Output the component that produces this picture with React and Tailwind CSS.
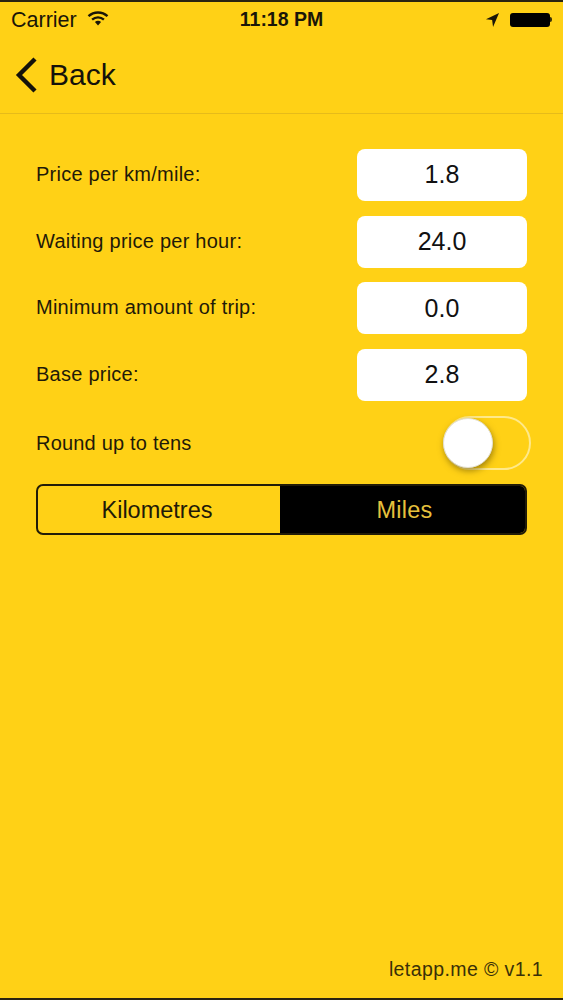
import React from "react";

const fields = [
  { label: "Price per km/mile:", value: "1.8" },
  { label: "Waiting price per hour:", value: "24.0" },
  { label: "Minimum amount of trip:", value: "0.0" },
  { label: "Base price:", value: "2.8" },
];

const WifiIcon = () => (
  <svg width="22" height="15" viewBox="0 0 21 15" className="ml-[10px] mb-[4px]">
    <path d="M1 5.2 C6.4 0.2 14.6 0.2 20 5.2" fill="none" stroke="#1a1608" strokeWidth="2.4" />
    <path d="M4.6 8.6 C8 5.6 13 5.6 16.4 8.6" fill="none" stroke="#1a1608" strokeWidth="2.4" />
    <path d="M7.4 11 C9.2 9.4 11.8 9.4 13.6 11 L10.5 14.4 Z" fill="#1a1608" />
  </svg>
);

const LocationIcon = () => (
  <svg width="15" height="14" viewBox="0 0 14 15">
    <path d="M14 0 L0 6.6 L6.6 7.6 L7.6 15 Z" fill="#1a1608" />
  </svg>
);

const Battery = () => (
  <div className="flex items-center ml-[5px] mb-[1px]">
    <div className="w-[40px] h-[14px] rounded-[3px] bg-black" />
    <div className="w-[2px] h-[5px] rounded-r-sm bg-[#3a3008]" />
  </div>
);

const BackChevron = () => (
  <svg width="24" height="38" viewBox="0 0 24 38">
    <path d="M21 3 L5 19 L21 35" fill="none" stroke="#15120a" strokeWidth="4.4" />
  </svg>
);

const Row = ({ label, value }) => (
  <div className="flex items-center justify-between h-[52px]">
    <span className="text-[20px] tracking-[0.25px] mb-[2px] text-[#1f1a08]">{label}</span>
    <div className="w-[170px] h-[52px] rounded-[8px] bg-white flex items-center justify-center text-[25px] text-[#111]">
      {value}
    </div>
  </div>
);

export default function App() {
  return (
    <div
      className="w-[563px] h-[1000px] bg-[#ffd116] flex flex-col border-t-2 border-b-2 border-t-[#2a2410] border-b-[#2a2410] overflow-hidden"
      style={{ fontFamily: '"Liberation Sans", Arial, sans-serif' }}
    >
      <div className="flex items-center justify-between h-[36px] pl-[11px] pr-[11px] text-[#1a1608]">
        <div className="flex items-center w-[160px]">
          <span className="text-[21.5px]">Carrier</span>
          <WifiIcon />
        </div>
        <span className="text-[19.5px] font-bold">11:18 PM</span>
        <div className="flex items-center justify-end w-[160px]">
          <LocationIcon />
          <div className="w-[5px]" />
          <Battery />
        </div>
      </div>

      <div className="flex items-center gap-[11px] h-[76px] pl-[14px] pb-[2px] border-b border-b-[#e6bb1a] text-[#15120a]">
        <BackChevron />
        <span className="text-[30px]">Back</span>
      </div>

      <div className="flex flex-col flex-1 pt-[35px] pl-[36px] pr-[36px]">
        <div className="flex flex-col gap-[14.7px]">
          {fields.map((f) => (
            <Row key={f.label} label={f.label} value={f.value} />
          ))}
        </div>

        <div className="flex items-center justify-between h-[54px] mt-[15px] -mr-[4px]">
          <span className="text-[20px] tracking-[0.2px] text-[#1f1a08]">Round up to tens</span>
          <div className="relative w-[88px] h-[54px] rounded-full border-2 border-[#ffe98a]">
            <div className="absolute -left-[2px] top-0 w-[50px] h-[50px] rounded-full bg-white border border-[#e4e0d0] shadow-[1px_3px_6px_rgba(90,70,0,0.55)]" />
          </div>
        </div>

        <div className="flex h-[51px] mt-[14px] rounded-[7px] border-2 border-[#221c08] overflow-hidden text-[23.5px]">
          <div className="w-[242px] pr-[4px] pt-[2px] flex items-center justify-center text-[#1f1a08]">Kilometres</div>
          <div className="flex-1 pl-[4px] pt-[2px] bg-black flex items-center justify-center text-[#e6c03c] tracking-[0.2px]">Miles</div>
        </div>

        <div className="mt-auto -mr-[16px] pb-[14px] text-right text-[19.5px] tracking-[0.4px] text-[#3a3008]">
          letapp.me © v1.1
        </div>
      </div>
    </div>
  );
}
